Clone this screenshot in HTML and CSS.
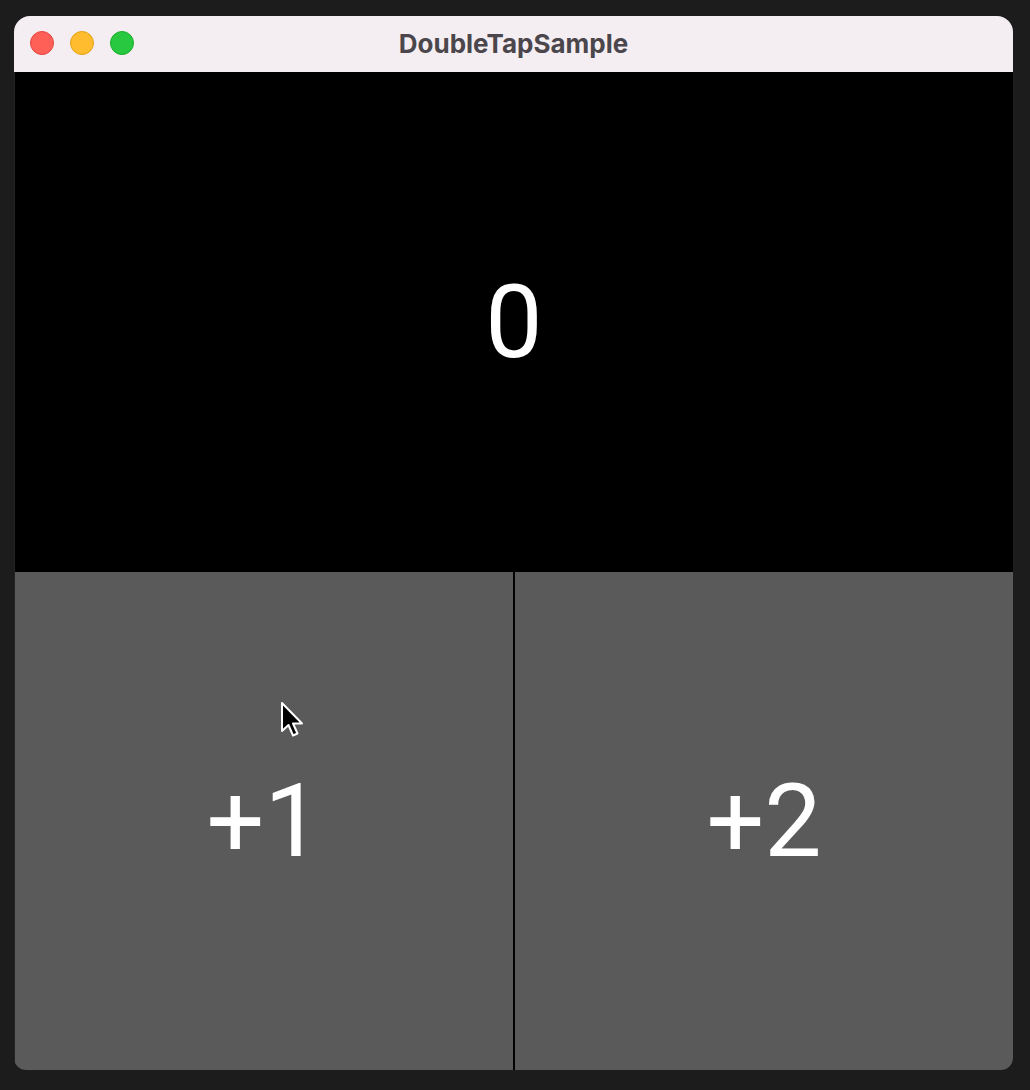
FILE: index.html
```html
<!DOCTYPE html>
<html>

<head>
  <meta charset="utf-8">
  <meta name="viewport" content="width=device-width">
  <title>DoubleTapSample</title>
  <link rel="stylesheet" href="styles.css">
</head>

<body>
  <div class="window">
    <div class="titlebar">
      <div class="lights">
        <span class="light red"></span>
        <span class="light yellow"></span>
        <span class="light green"></span>
      </div>
      <div class="title">DoubleTapSample</div>
    </div>

    <div class="content">
      <div class="counter">0</div>
      <div class="buttons">
        <button class="button">+1</button>
        <button class="button">+2</button>
      </div>
    </div>

    <svg class="cursor" width="26" height="38" viewBox="0 0 26 38">
      <path d="M2 2 L2 30 L8.5 24 L13 34.5 L17.5 32.5 L13 22.5 L22 22.5 Z" fill="#000" stroke="#fff" stroke-width="2" stroke-linejoin="round"/>
    </svg>
  </div>
</body>

</html>
```

FILE: styles.css
```css
body {
  margin: 0;
  padding: 16px 0 0 14px;
  background-color: #1c1c1c;
}

.window {
  position: relative;
  width: 999px;
  height: 1054px;
  border-radius: 16px 16px 12px 12px;
  overflow: hidden;
  background-color: #232323;
}

.titlebar {
  position: relative;
  height: 56px;
  background-color: #f4eef3;
  display: flex;
  align-items: center;
  justify-content: center;
}

.lights {
  position: absolute;
  left: 16px;
  top: 15px;
  display: flex;
  gap: 16px;
}

.light {
  width: 24px;
  height: 24px;
  border-radius: 50%;
  box-sizing: border-box;
}

.red {
  background-color: #fe5f57;
  border: 1px solid #e2463f;
}

.yellow {
  background-color: #febc2e;
  border: 1px solid #e1a116;
}

.green {
  background-color: #28c840;
  border: 1px solid #1aab29;
}

.title {
  font-family: Inter, "Liberation Sans", sans-serif;
  font-weight: 700;
  font-size: 26px;
  color: #4b464b;
  margin-top: -1px;
}

.content {
  padding-left: 1px;
}

.counter {
  height: 500px;
  background-color: #000;
  color: #fff;
  font-family: Roboto, sans-serif;
  font-size: 102px;
  display: flex;
  align-items: center;
  justify-content: center;
}

.buttons {
  display: grid;
  grid-template-columns: 498px 498px;
  gap: 2px;
  background-color: #000;
  height: 498px;
}

.button {
  background-color: #5a5a5a;
  color: #fff;
  font-family: Roboto, sans-serif;
  font-size: 102px;
  border: none;
  padding: 0;
  margin: 0;
}

.cursor {
  position: absolute;
  left: 266px;
  top: 685px;
}
```
